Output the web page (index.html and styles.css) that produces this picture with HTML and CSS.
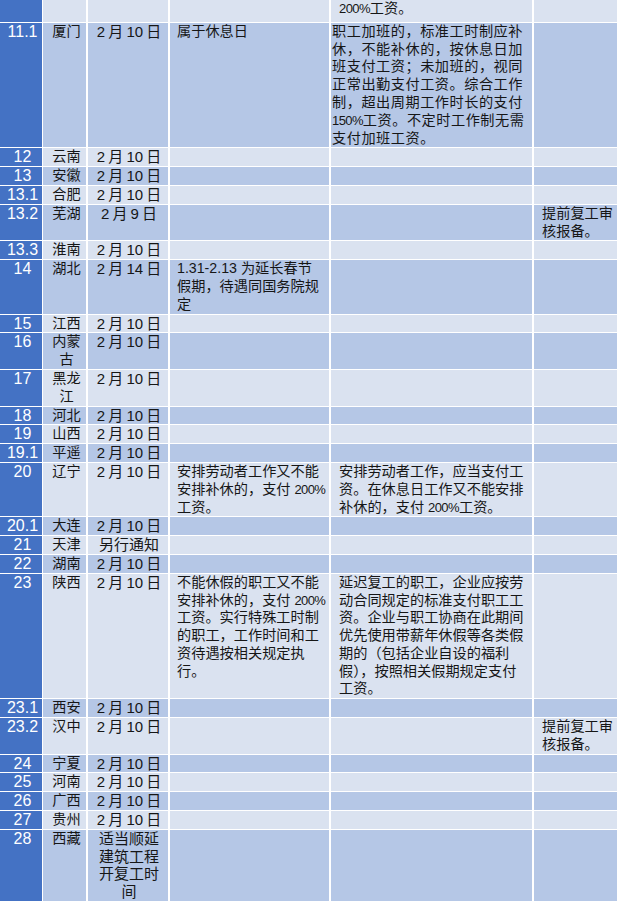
FILE: index.html
```html
<!DOCTYPE html>
<html lang="zh-CN">
<head>
<meta charset="utf-8">
<title>复工时间表</title>
<link rel="stylesheet" href="styles.css">
</head>
<body>
<table class="sheet">
  <colgroup>
    <col class="c1"><col class="c2"><col class="c3"><col class="c4"><col class="c5"><col class="c6">
  </colgroup>
  <tbody>
    <tr class="lt top"><td class="no"></td><td class="prov"></td><td class="date"></td><td class="d4"></td><td class="d5"><span class="pct">200%</span>工资。</td><td class="d6"></td></tr>
    <tr class="dk"><td class="no">11.1</td><td class="prov">厦门</td><td class="date">2 月 10 日</td><td class="d4">属于休息日</td><td class="d5 tight">职工加班的，标准工时制应补<br>休，不能补休的，按休息日加<br>班支付工资；未加班的，视同<br>正常出勤支付工资。综合工作<br>制，超出周期工作时长的支付<br><span class="pct">150%</span>工资。不定时工作制无需<br>支付加班工资。</td><td class="d6"></td></tr>
    <tr class="lt"><td class="no">12</td><td class="prov">云南</td><td class="date">2 月 10 日</td><td class="d4"></td><td class="d5"></td><td class="d6"></td></tr>
    <tr class="dk"><td class="no">13</td><td class="prov">安徽</td><td class="date">2 月 10 日</td><td class="d4"></td><td class="d5"></td><td class="d6"></td></tr>
    <tr class="lt"><td class="no">13.1</td><td class="prov">合肥</td><td class="date">2 月 10 日</td><td class="d4"></td><td class="d5"></td><td class="d6"></td></tr>
    <tr class="dk"><td class="no">13.2</td><td class="prov">芜湖</td><td class="date">2 月 9 日</td><td class="d4"></td><td class="d5"></td><td class="d6">提前复工审<br>核报备。</td></tr>
    <tr class="lt"><td class="no">13.3</td><td class="prov">淮南</td><td class="date">2 月 10 日</td><td class="d4"></td><td class="d5"></td><td class="d6"></td></tr>
    <tr class="dk"><td class="no">14</td><td class="prov">湖北</td><td class="date">2 月 14 日</td><td class="d4">1.31-2.13 为延长春节<br>假期，待遇同国务院规<br>定</td><td class="d5"></td><td class="d6"></td></tr>
    <tr class="lt"><td class="no">15</td><td class="prov">江西</td><td class="date">2 月 10 日</td><td class="d4"></td><td class="d5"></td><td class="d6"></td></tr>
    <tr class="dk"><td class="no">16</td><td class="prov">内蒙<br>古</td><td class="date">2 月 10 日</td><td class="d4"></td><td class="d5"></td><td class="d6"></td></tr>
    <tr class="lt"><td class="no">17</td><td class="prov">黑龙<br>江</td><td class="date">2 月 10 日</td><td class="d4"></td><td class="d5"></td><td class="d6"></td></tr>
    <tr class="dk"><td class="no">18</td><td class="prov">河北</td><td class="date">2 月 10 日</td><td class="d4"></td><td class="d5"></td><td class="d6"></td></tr>
    <tr class="lt"><td class="no">19</td><td class="prov">山西</td><td class="date">2 月 10 日</td><td class="d4"></td><td class="d5"></td><td class="d6"></td></tr>
    <tr class="dk"><td class="no">19.1</td><td class="prov">平遥</td><td class="date">2 月 10 日</td><td class="d4"></td><td class="d5"></td><td class="d6"></td></tr>
    <tr class="lt"><td class="no">20</td><td class="prov">辽宁</td><td class="date">2 月 10 日</td><td class="d4">安排劳动者工作又不能<br>安排补休的，支付 <span class="pct">200%</span><br>工资。</td><td class="d5">安排劳动者工作，应当支付工<br>资。在休息日工作又不能安排<br>补休的，支付 <span class="pct">200%</span>工资。</td><td class="d6"></td></tr>
    <tr class="dk"><td class="no">20.1</td><td class="prov">大连</td><td class="date">2 月 10 日</td><td class="d4"></td><td class="d5"></td><td class="d6"></td></tr>
    <tr class="lt"><td class="no">21</td><td class="prov">天津</td><td class="date">另行通知</td><td class="d4"></td><td class="d5"></td><td class="d6"></td></tr>
    <tr class="dk"><td class="no">22</td><td class="prov">湖南</td><td class="date">2 月 10 日</td><td class="d4"></td><td class="d5"></td><td class="d6"></td></tr>
    <tr class="lt"><td class="no">23</td><td class="prov">陕西</td><td class="date">2 月 10 日</td><td class="d4">不能休假的职工又不能<br>安排补休的，支付 <span class="pct">200%</span><br>工资。实行特殊工时制<br>的职工，工作时间和工<br>资待遇按相关规定执<br>行。</td><td class="d5">延迟复工的职工，企业应按劳<br>动合同规定的标准支付职工工<br>资。企业与职工协商在此期间<br>优先使用带薪年休假等各类假<br>期的（包括企业自设的福利<br>假），按照相关假期规定支付<br>工资。</td><td class="d6"></td></tr>
    <tr class="dk"><td class="no">23.1</td><td class="prov">西安</td><td class="date">2 月 10 日</td><td class="d4"></td><td class="d5"></td><td class="d6"></td></tr>
    <tr class="lt"><td class="no">23.2</td><td class="prov">汉中</td><td class="date">2 月 10 日</td><td class="d4"></td><td class="d5"></td><td class="d6">提前复工审<br>核报备。</td></tr>
    <tr class="dk"><td class="no">24</td><td class="prov">宁夏</td><td class="date">2 月 10 日</td><td class="d4"></td><td class="d5"></td><td class="d6"></td></tr>
    <tr class="lt"><td class="no">25</td><td class="prov">河南</td><td class="date">2 月 10 日</td><td class="d4"></td><td class="d5"></td><td class="d6"></td></tr>
    <tr class="dk"><td class="no">26</td><td class="prov">广西</td><td class="date">2 月 10 日</td><td class="d4"></td><td class="d5"></td><td class="d6"></td></tr>
    <tr class="lt"><td class="no">27</td><td class="prov">贵州</td><td class="date">2 月 10 日</td><td class="d4"></td><td class="d5"></td><td class="d6"></td></tr>
    <tr class="dk"><td class="no">28</td><td class="prov">西藏</td><td class="date">适当顺延<br>建筑工程<br>开复工时<br>间</td><td class="d4"></td><td class="d5"></td><td class="d6"></td></tr>
  </tbody>
</table>
</body>
</html>
```
FILE: styles.css
```css
html, body {
  margin: 0;
  padding: 0;
  background: #ffffff;
}

body {
  font-family: "Liberation Sans", "Noto Sans CJK SC", sans-serif;
  color: #161616;
}

.sheet {
  border-collapse: separate;
  border-spacing: 0;
  table-layout: fixed;
  width: 619px;
  font-size: 14.2px;
  line-height: 17.8px;
}

.c1 { width: 43px; }
.c2 { width: 45px; }
.c3 { width: 82px; }
.c4 { width: 161px; }
.c5 { width: 203px; }
.c6 { width: 85px; }

.sheet td {
  box-sizing: border-box;
  padding: 0 0 0 6px;
  border-right: 2px solid #ffffff;
  border-bottom: 1px solid #ffffff;
  vertical-align: top;
  white-space: nowrap;
  overflow: hidden;
}

.lt { background: #dae2f0; }
.dk { background: #b5c7e6; }

.top td { padding-bottom: 4px; }

.sheet td.no {
  background: #4472c4;
  color: #ffffff;
  text-align: center;
  font-size: 16px;
  padding-left: 3px;
  border-right-width: 1px;
}

.sheet td.prov {
  text-align: center;
  padding-left: 4px;
}

.sheet td.date {
  text-align: center;
  font-size: 15px;
  word-spacing: -1px;
  padding-left: 2px;
}

.sheet td.d4 { padding-left: 7px; }
.sheet td.d5 { padding-left: 8px; }
.sheet td.d5.tight { padding-left: 1px; letter-spacing: 0.5px; }
.sheet td.d6 { padding-left: 8px; }

.pct {
  font-size: 13px;
  letter-spacing: -0.6px;
}
```
